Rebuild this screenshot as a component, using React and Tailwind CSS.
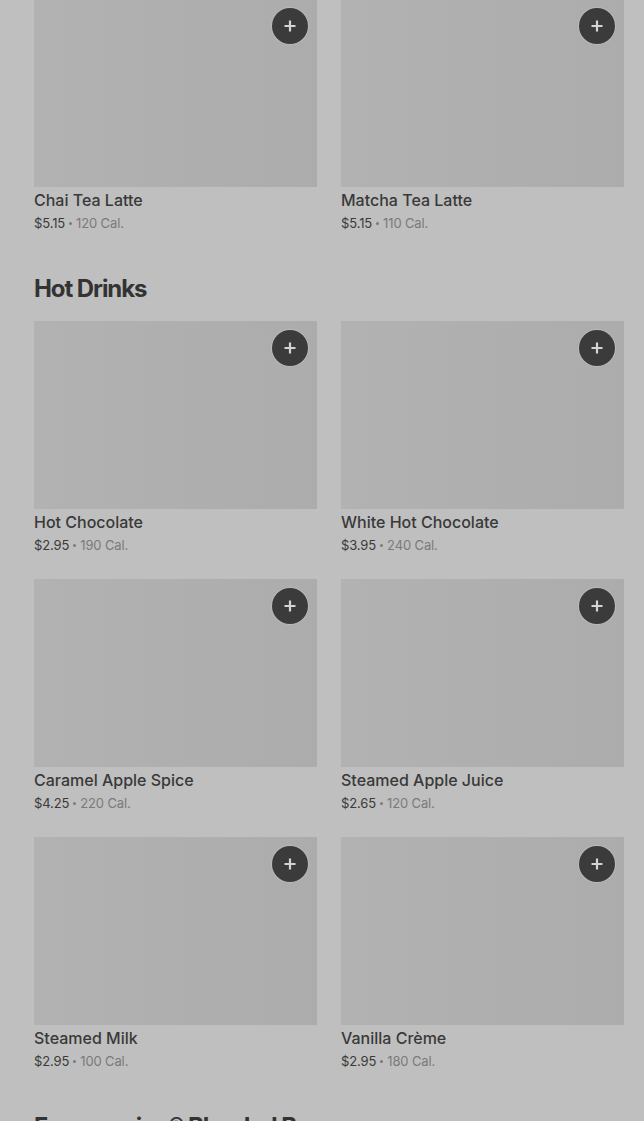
import React from "react";

const sections = [
  {
    title: null,
    items: [
      { name: "Chai Tea Latte", price: "$5.15", cal: "120 Cal." },
      { name: "Matcha Tea Latte", price: "$5.15", cal: "110 Cal." },
    ],
  },
  {
    title: "Hot Drinks",
    items: [
      { name: "Hot Chocolate", price: "$2.95", cal: "190 Cal." },
      { name: "White Hot Chocolate", price: "$3.95", cal: "240 Cal." },
      { name: "Caramel Apple Spice", price: "$4.25", cal: "220 Cal." },
      { name: "Steamed Apple Juice", price: "$2.65", cal: "120 Cal." },
      { name: "Steamed Milk", price: "$2.95", cal: "100 Cal." },
      { name: "Vanilla Crème", price: "$2.95", cal: "180 Cal." },
    ],
  },
  {
    title: "Frappuccino® Blended Beverages",
    items: [],
  },
];

function AddButton() {
  return (
    <button className="absolute right-[9px] top-[9px] flex h-9 w-9 items-center justify-center rounded-full bg-[#3b3b3b] shadow-[0_0_0_1px_rgba(200,200,200,0.5)]">
      <svg width="14" height="14" viewBox="0 0 14 14" fill="none">
        <path d="M7 1.5v11M1.5 7h11" stroke="#d4d4d4" strokeWidth="2.2" />
      </svg>
    </button>
  );
}

function ItemCard({ item }) {
  return (
    <div className="flex flex-col">
      <div className="relative h-[188px] w-full bg-gradient-to-r from-[#b2b2b2] to-[#acacac]">
        <AddButton />
      </div>
      <div className="mt-[3px] h-5 text-[16px] leading-5 font-medium text-[#393939]">{item.name}</div>
      <div className="mt-[3px] flex h-5 items-center text-[13px] leading-5 tracking-[-0.01em] text-[#3a3a3a]">
        <span>{item.price}</span>
        <span className="mx-[4px] h-[3px] w-[3px] rounded-full bg-[#7a7a7a]" />
        <span className="text-[#7a7a7a]">{item.cal}</span>
      </div>
    </div>
  );
}

export default function App() {
  return (
    <div
      className="min-h-screen overflow-hidden bg-[#bfbfbf] px-[34px]"
      style={{ fontFamily: "Inter, 'Liberation Sans', sans-serif" }}
    >
      <div className="-mt-[1px]">
        {sections.map((section, i) => (
          <div key={i} className={section.title ? "pt-[40px]" : ""}>
            {section.title && (
              <h2 className="mb-[16px] text-[24px] leading-8 font-bold tracking-[-0.045em] text-[#333333]">
                {section.title}
              </h2>
            )}
            <div className="grid grid-cols-2 gap-x-6 gap-y-6 -mr-[14px]">
              {section.items.map((item) => (
                <ItemCard key={item.name} item={item} />
              ))}
            </div>
          </div>
        ))}
      </div>
    </div>
  );
}
